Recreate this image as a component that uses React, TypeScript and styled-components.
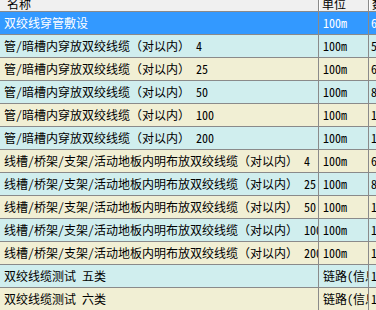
import React from "react";
import styled, { createGlobalStyle } from "styled-components";

const GlobalStyle = createGlobalStyle`
  html, body {
    margin: 0;
    padding: 0;
    background: #ffffff;
  }
  body {
    width: 376px;
    height: 310px;
    overflow: hidden;
    font-family: "Noto Sans Mono CJK SC", "Noto Sans CJK SC", sans-serif;
    font-size: 12px;
  }
`;

type Row = {
  name: string;
  unit: string;
  qty: string;
};

const rows: Row[] = [
  { name: "双绞线穿管敷设", unit: "100m", qty: "6" },
  { name: "管/暗槽内穿放双绞线缆（对以内） 4", unit: "100m", qty: "5" },
  { name: "管/暗槽内穿放双绞线缆（对以内） 25", unit: "100m", qty: "6" },
  { name: "管/暗槽内穿放双绞线缆（对以内） 50", unit: "100m", qty: "8" },
  { name: "管/暗槽内穿放双绞线缆（对以内） 100", unit: "100m", qty: "1" },
  { name: "管/暗槽内穿放双绞线缆（对以内） 200", unit: "100m", qty: "1" },
  { name: "线槽/桥架/支架/活动地板内明布放双绞线缆（对以内） 4", unit: "100m", qty: "6" },
  { name: "线槽/桥架/支架/活动地板内明布放双绞线缆（对以内） 25", unit: "100m", qty: "8" },
  { name: "线槽/桥架/支架/活动地板内明布放双绞线缆（对以内） 50", unit: "100m", qty: "1" },
  { name: "线槽/桥架/支架/活动地板内明布放双绞线缆（对以内） 100", unit: "100m", qty: "1" },
  { name: "线槽/桥架/支架/活动地板内明布放双绞线缆（对以内） 200", unit: "100m", qty: "1" },
  { name: "双绞线缆测试 五类", unit: "链路(信息点)", qty: "1" },
  { name: "双绞线缆测试 六类", unit: "链路(信息点)", qty: "1" },
];

const App = () => {
  return (
    <>
      <GlobalStyle />
      <Grid>
        <HeaderRow>
          <HeaderCell>名称</HeaderCell>
          <HeaderCell>单位</HeaderCell>
          <HeaderCell>数量</HeaderCell>
        </HeaderRow>
        {rows.map((row, i) => {
          const tone = i === 0 ? "selected" : i % 2 === 1 ? "cyan" : "beige";
          return (
            <DataRow key={i} $tone={tone}>
              <Cell>{row.name}</Cell>
              <Cell>{row.unit}</Cell>
              <Cell>{row.qty}</Cell>
            </DataRow>
          );
        })}
      </Grid>
    </>
  );
};

export default App;

const Grid = styled.div`
  width: 376px;
  margin-top: -4px;
  display: flex;
  flex-direction: column;
`;

const columns = "319px 50px 1fr";

const HeaderRow = styled.div`
  display: grid;
  grid-template-columns: ${columns};
  height: 15px;
  border-bottom: 1px solid #8a8a8a;
  background: #f0f0f0;
`;

const HeaderCell = styled.div`
  padding-left: 3px;
  line-height: 15px;
  color: #000;
  border-right: 1px solid #8a8a8a;
  box-shadow: inset 1px 0 0 #ffffff;
  white-space: nowrap;
  overflow: hidden;

  &:first-child {
    padding-left: 7px;
    box-shadow: none;
  }
  &:last-child {
    border-right: none;
  }
`;

const toneColors = {
  selected: { bg: "#3399ff", fg: "#ffffff" },
  cyan: { bg: "#d0eeee", fg: "#000000" },
  beige: { bg: "#f1efd4", fg: "#000000" },
};

const DataRow = styled.div<{ $tone: keyof typeof toneColors }>`
  display: grid;
  grid-template-columns: ${columns};
  height: 22px;
  border-bottom: 1px solid #8a8a8a;
  background: ${({ $tone }) => toneColors[$tone].bg};
  color: ${({ $tone }) => toneColors[$tone].fg};
`;

const Cell = styled.div`
  padding-left: 4px;
  line-height: 22px;
  border-right: 1px solid #8a8a8a;
  white-space: nowrap;
  overflow: hidden;

  &:last-child {
    border-right: none;
    padding-left: 2px;
  }
`;
